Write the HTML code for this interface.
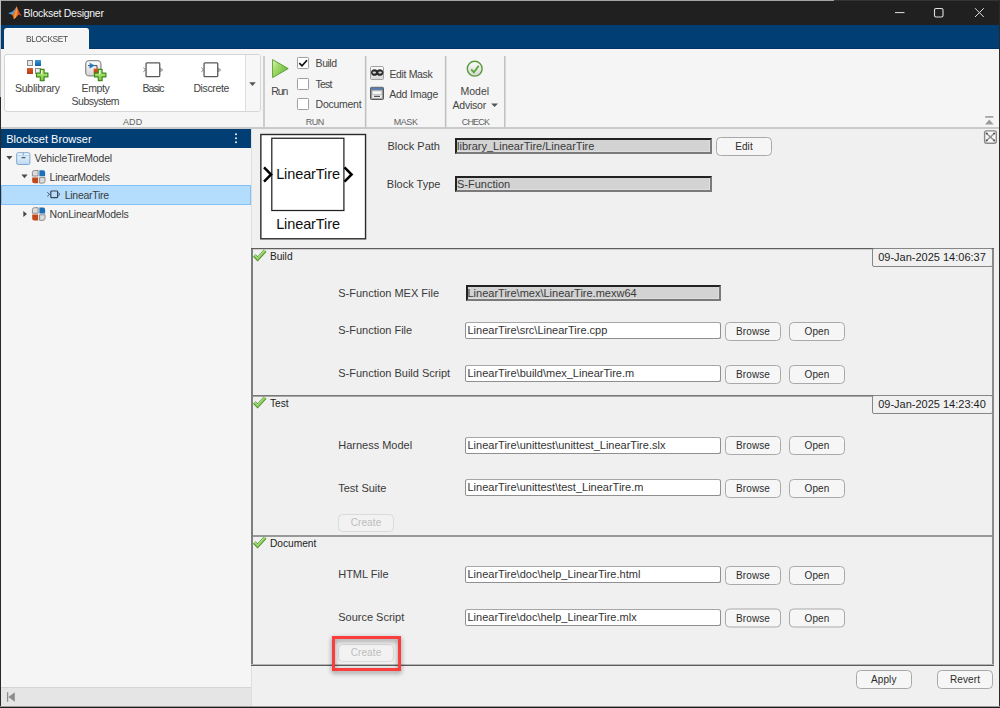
<!DOCTYPE html>
<html><head><meta charset="utf-8"><title>Blockset Designer</title>
<style>
*{box-sizing:border-box;margin:0;padding:0}
html,body{width:1000px;height:708px;overflow:hidden;background:#f0f0f0}
body{position:relative;font-family:"Liberation Sans",sans-serif;font-size:11px;color:#333}
.a{position:absolute}
.x{position:absolute;white-space:nowrap}
#titlebar{left:0;top:0;width:1000px;height:25px;background:#202020}
#band{left:0;top:25px;width:1000px;height:24px;background:#003e73;border-bottom:1px solid #00326a}
#tab{left:4px;top:28px;width:85px;height:22px;background:#f5f5f5;border-radius:3px 3px 0 0;border-top:1px solid #fff}
#strip{left:0;top:49px;width:1000px;height:79px;background:#f5f5f5}
#stripline{left:0;top:127px;width:1000px;height:2px;background:#cacaca}
.vsep{position:absolute;top:56px;width:3px;height:71px}
#gallery{left:4px;top:54px;width:257px;height:58px;background:#fff;border:1px solid #d6d6d6;border-radius:3px}
#galdd{left:245px;top:55px;width:15px;height:56px;background:#f7f7f7;border-left:1px solid #dedede;border-radius:0 2px 2px 0}
.cb{position:absolute;width:12px;height:12px;background:#fff;border:1px solid #a0a0a0;border-radius:1.5px;box-shadow:0 0 1px rgba(0,0,0,.15)}
#lpanel{left:1px;top:129px;width:250px;height:578px;background:#f5f5f5}
#lhead{left:1px;top:129px;width:250px;height:19px;background:#003e73}
#lfoot{left:1px;top:687px;width:250px;height:20px;background:#e5e5e5;border-top:1px solid #d4d4d4}
#sel{left:1px;top:185px;width:250px;height:20px;background:#b4ddfd;border:1px solid #82c0f5}
#rpanel{left:251px;top:129px;width:749px;height:578px;background:#f0f0f0}
.fld{position:absolute;left:465px;width:256px;height:17px;background:#fff;border:1px solid #8f8f8f;border-top-color:#a6a6a6;border-radius:2.5px;font-size:11px;line-height:15px;padding-left:1.5px;color:#333;white-space:nowrap;overflow:hidden}
.ro{position:absolute;height:16px;background:#d3d3d3;border:2px solid #7a7a7a;border-top:2px solid #222;border-left:2px solid #222;box-shadow:inset -1px -1px 0 #dedede;font-size:11px;line-height:12px;padding-left:0px;color:#3a3a3a;white-space:nowrap;overflow:hidden}
.btn{position:absolute;height:19px;background:#f6f6f6;border:1px solid #a9a9a9;border-radius:4.5px;font-size:10px;letter-spacing:0.1px;line-height:17px;text-align:center;color:#2c2c2c}
.dis{color:#bdbdbd;border-color:#dadada;background:#f2f2f2}
.pan{position:absolute;left:251px;width:743px;border:1px solid #6e6e6e;border-left:2px solid #7c7c7c;border-top-color:#5a5a5a;background:#f0f0f0}
.ts{position:absolute;left:872px;width:121px;height:19px;background:#f0f0f0;border:1px solid #868686;border-radius:2px;font-size:11px;line-height:17px;text-align:center;color:#1e1e1e;padding-right:1px}
</style></head>
<body>
<div class="a" id="titlebar"></div>
<svg class="a" style="left:6.800px;top:5.200px" width="17" height="16" viewBox="0 0 17 16">
  <path d="M1.2 8.300 L5.600 6.500 L8.200 3.800 L9.600 1.300 L7 10.400 L5 9.800 Z" fill="#4b9fe0"/>
  <path d="M5 9.800 L7.600 6.500 L9.600 1.300 C10.800 3.700 11.800 7.500 14.600 10.700 L11.800 9.500 L9 12.200 L6.800 14.300 L6 11.300 Z" fill="#e56f28"/>
  <path d="M9.600 1.300 C10.800 3.700 11.800 7.500 14.600 10.700 L11.900 9.500 C10.900 6.600 10.200 3.600 9.600 1.300Z" fill="#c93a2c"/>
  <path d="M6.800 14.300 L9 12.200 L10.300 5.200 L9.600 1.300 L8 8 Z" fill="#f7993a"/>
</svg>
<div class="x" style="left:23.6px;top:6.36px;font-size:10.5px;line-height:14px;color:#f2f2f2;letter-spacing:-0.27px;">Blockset Designer</div>
<svg class="a" style="left:890px;top:4px" width="100" height="18" viewBox="0 0 100 18">
  <path d="M5 8.600 H14.500" stroke="#e0e0e0" stroke-width="1" fill="none"/>
  <rect x="44.500" y="4.500" width="8.500" height="8.500" rx="1.600" stroke="#e0e0e0" stroke-width="1.100" fill="none"/>
  <path d="M85 4.200 L93.800 13 M93.800 4.200 L85 13" stroke="#e0e0e0" stroke-width="1" fill="none"/>
</svg>
<div class="a" id="band"></div>
<div class="a" id="strip"></div>
<div class="a" id="tab"></div>
<div class="x" style="left:4px;top:31.71px;font-size:9.5px;line-height:14px;color:#4a4a4a;letter-spacing:-0.4px;width:85.0px;text-align:center;transform:scaleX(0.88);transform-origin:50% 50%;padding-left:1px;">BLOCKSET</div>
<div class="a" id="gallery"></div>
<div class="a" id="galdd"></div>
<div class="a" id="stripline"></div>
<div class="vsep" style="left:263px;background:linear-gradient(to right,#cdcdcd 0 1px,#cdcdcd 1px 2px,transparent 2px)"></div>
<div class="vsep" style="left:364px;background:linear-gradient(to right,#ececec 0 1px,#c0c0c0 1px 2px,#e0e0e0 2px)"></div>
<div class="vsep" style="left:444px;background:linear-gradient(to right,#ececec 0 1px,#c0c0c0 1px 2px,#e0e0e0 2px)"></div>
<div class="vsep" style="left:504px;background:linear-gradient(to right,#c2c2c2 0 1px,#d8d8d8 1px 2px,transparent 2px)"></div>
<div class="x" style="left:92.6px;top:115.08px;font-size:9px;line-height:14px;color:#626262;letter-spacing:0.1px;width:80px;text-align:center;padding-left:0.00px;">ADD</div>
<div class="x" style="left:274.6px;top:115.08px;font-size:9px;line-height:14px;color:#626262;letter-spacing:-0.45px;width:80px;text-align:center;padding-left:0.45px;">RUN</div>
<div class="x" style="left:365.4px;top:115.08px;font-size:9px;line-height:14px;color:#626262;letter-spacing:-0.4px;width:80px;text-align:center;padding-left:0.40px;">MASK</div>
<div class="x" style="left:435.0px;top:115.08px;font-size:9px;line-height:14px;color:#626262;letter-spacing:-0.83px;width:80px;text-align:center;padding-left:0.83px;">CHECK</div>
<div class="x" style="left:15.0px;top:80.96px;font-size:10.5px;line-height:14px;color:#444;letter-spacing:-0.24px;">Sublibrary</div>
<div class="x" style="left:81.6px;top:80.96px;font-size:10.5px;line-height:14px;color:#444;letter-spacing:-0.4px;">Empty</div>
<div class="x" style="left:71.6px;top:94.16px;font-size:10.5px;line-height:14px;color:#444;letter-spacing:-0.5px;">Subsystem</div>
<div class="x" style="left:142.4px;top:80.96px;font-size:10.5px;line-height:14px;color:#444;letter-spacing:-0.88px;">Basic</div>
<div class="x" style="left:193.4px;top:80.96px;font-size:10.5px;line-height:14px;color:#444;letter-spacing:-0.36px;">Discrete</div>
<div class="x" style="left:271.2px;top:84.16px;font-size:10.5px;line-height:14px;color:#444;letter-spacing:-1.05px;">Run</div>
<div class="x" style="left:315.6px;top:55.96px;font-size:10.5px;line-height:14px;color:#444;letter-spacing:-0.47px;">Build</div>
<div class="x" style="left:315.6px;top:76.96px;font-size:10.5px;line-height:14px;color:#444;letter-spacing:-0.83px;">Test</div>
<div class="x" style="left:315.6px;top:97.36px;font-size:10.5px;line-height:14px;color:#444;letter-spacing:-0.27px;">Document</div>
<div class="x" style="left:389.4px;top:66.96px;font-size:10.5px;line-height:14px;color:#444;letter-spacing:-0.34px;">Edit Mask</div>
<div class="x" style="left:389.2px;top:87.16px;font-size:10.5px;line-height:14px;color:#444;letter-spacing:-0.21px;">Add Image</div>
<div class="x" style="left:460.4px;top:84.16px;font-size:10.5px;line-height:14px;color:#444;letter-spacing:0.05px;">Model</div>
<div class="x" style="left:452.6px;top:97.96px;font-size:10.5px;line-height:14px;color:#444;letter-spacing:-0.23px;">Advisor</div>
<svg class="a" style="left:0;top:49px" width="1000" height="79" viewBox="0 49 1000 79">
  <defs>
    <linearGradient id="gr" x1="0" y1="0" x2="1" y2="0.6"><stop offset="0" stop-color="#e4f6cc"/><stop offset="0.35" stop-color="#a6dc6e"/><stop offset="1" stop-color="#6eb83a"/></linearGradient>
    <linearGradient id="gb" x1="0" y1="0" x2="0" y2="1"><stop offset="0" stop-color="#3a9ada"/><stop offset="1" stop-color="#0d5ea6"/></linearGradient>
    <linearGradient id="go" x1="0" y1="0" x2="0" y2="1"><stop offset="0" stop-color="#d85a28"/><stop offset="1" stop-color="#b83a12"/></linearGradient>
    <linearGradient id="gg" x1="0" y1="0" x2="0" y2="1"><stop offset="0" stop-color="#fdfdfd"/><stop offset="1" stop-color="#d6d6d6"/></linearGradient>
    <linearGradient id="gp" x1="0" y1="0" x2="0" y2="1"><stop offset="0" stop-color="#c4f08c"/><stop offset="1" stop-color="#7cc83c"/></linearGradient>
  </defs>
  <!-- sublibrary -->
  <rect x="27.500" y="60.500" width="5" height="5" fill="#e6e6e6" stroke="#8c8c8c"/>
  <rect x="35" y="60" width="6" height="6" rx="0.500" fill="url(#gb)"/>
  <rect x="27" y="68" width="6" height="6" rx="0.500" fill="url(#go)"/>
  <rect x="35.500" y="68.500" width="5" height="5" fill="#ececec" stroke="#8c8c8c"/>
  <g transform="translate(35.900,68.700)"><path d="M4.400 0.600h3.800v3.800h3.800v3.800h-3.800v3.800h-3.800v-3.800h-3.800v-3.800h3.800z" fill="url(#gp)" stroke="#3f8a1e" stroke-width="1.200" stroke-linejoin="round"/><path d="M5.700 2v3.500" stroke="#f2fde4" stroke-width="1.200"/></g>
  <!-- empty subsystem -->
  <rect x="85.700" y="60.700" width="15.200" height="15.200" rx="3.500" fill="url(#gg)" stroke="#8e8e8e" stroke-width="1.300"/>
  <path d="M88 65.600h3M94 65.600h3v3.500" stroke="#4a4a4a" fill="none" stroke-width="1"/>
  <path d="M89.600 62.600 l5.200 3 l-5.200 3z" fill="url(#gb)"/>
  <rect x="93.700" y="68.600" width="4.600" height="5" fill="url(#go)"/>
  <g transform="translate(93.900,68.700)"><path d="M4.400 0.600h3.800v3.800h3.800v3.800h-3.800v3.800h-3.800v-3.800h-3.800v-3.800h3.800z" fill="url(#gp)" stroke="#3f8a1e" stroke-width="1.200" stroke-linejoin="round"/><path d="M5.700 2v3.500" stroke="#f2fde4" stroke-width="1.200"/></g>
  <!-- basic / discrete -->
  <g transform="translate(145.400,62.300)"><rect x="0.650" y="0.650" width="13.700" height="13.700" rx="0.800" fill="#fff" stroke="#5a5a5a" stroke-width="1.300"/><path d="M-2 5.500l2.200 2l-2.200 2" stroke="#6a6a6a" fill="none" stroke-width="0.900"/><path d="M15 5.800l2.300 1.800l-2.300 1.800z" fill="#f4f4f4" stroke="#6a6a6a" stroke-width="0.800"/></g>
  <g transform="translate(203.400,62.300)"><rect x="0.650" y="0.650" width="13.700" height="13.700" rx="0.800" fill="#fff" stroke="#5a5a5a" stroke-width="1.300"/><path d="M-2 5.500l2.200 2l-2.200 2" stroke="#6a6a6a" fill="none" stroke-width="0.900"/><path d="M15 5.800l2.300 1.800l-2.300 1.800z" fill="#f4f4f4" stroke="#6a6a6a" stroke-width="0.800"/></g>
  <!-- gallery dropdown -->
  <path d="M249.200 82.300h6.600l-3.300 3.600z" fill="#555"/>
  <!-- run -->
  <path d="M272.600 59.600 L288.200 68.600 L272.600 77.600z" fill="url(#gr)" stroke="#5f9f38" stroke-width="1" stroke-linejoin="round"/>
  <!-- edit mask icon -->
  <rect x="370.500" y="66.500" width="13" height="13" rx="1" fill="url(#gg)" stroke="#a0a0a0"/>
  <path d="M371 72.200c0.400-3.200 4.200-3.900 6.200-2c2-1.900 5.800-1.200 6.200 2c0.300 3.200-4 5-6.200 2.500c-2.200 2.500-6.500 0.700-6.200-2.500z" fill="#2a2a2a"/>
  <ellipse cx="374.300" cy="72.600" rx="1.800" ry="1.100" fill="#d4d4d4"/><ellipse cx="380.100" cy="72.600" rx="1.800" ry="1.100" fill="#d4d4d4"/>
  <!-- add image icon -->
  <rect x="370.500" y="87.300" width="13" height="12.200" rx="1" fill="#9a9a9a" stroke="#585858"/>
  <rect x="371" y="87.600" width="12" height="2.400" fill="#5a7fae"/>
  <rect x="372" y="90.400" width="10" height="8" fill="#c8c8c8"/>
  <rect x="372.800" y="91.400" width="8.400" height="2.300" rx="0.500" fill="#fdfdfd"/>
  <rect x="372.300" y="94.900" width="9.400" height="2.800" rx="0.800" fill="#f2f2f2"/>
  <path d="M374 96.300h6" stroke="#3a3a3a" stroke-width="1.100"/>
  <!-- model advisor -->
  <circle cx="474.700" cy="68.700" r="7.400" fill="url(#gg)" stroke="#5c9a3c" stroke-width="1.400"/>
  <path d="M471.200 69.300l2.700 3l4.800-6.600" stroke="#58a832" stroke-width="1.800" fill="none"/>
  <path d="M491.200 103.400h6.800l-3.400 3.700z" fill="#555"/>
  <!-- collapse icon -->
  <path d="M985.200 116.900h8.200" stroke="#9c9c9c" stroke-width="1.600"/>
  <path d="M985 124.600h8.600l-4.300-5.200z" fill="#9c9c9c"/>
</svg>
<div class="cb" style="left:297px;top:57px"></div>
<div class="cb" style="left:297px;top:77.500px"></div>
<div class="cb" style="left:297px;top:98px"></div>
<svg class="a" style="left:296px;top:56px" width="14" height="14"><path d="M3.300 7.100l2.700 2.700l5-5.600" stroke="#111" stroke-width="1.700" fill="none"/></svg>
<div class="a" id="lpanel"></div>
<div class="a" id="rpanel"></div>
<div class="a" style="left:251px;top:129px;width:1px;height:577px;background:#dedede"></div>
<div class="a" id="lhead"></div>
<div class="x" style="left:6.2px;top:132.19px;font-size:11px;line-height:14px;color:#fff;letter-spacing:0.03px;">Blockset Browser</div>
<svg class="a" style="left:233px;top:131px" width="6" height="14"><circle cx="3" cy="3.200" r="0.950" fill="#fff"/><circle cx="3" cy="7.200" r="0.950" fill="#fff"/><circle cx="3" cy="11.200" r="0.950" fill="#fff"/></svg>
<div class="a" id="sel"></div>
<div class="x" style="left:34.4px;top:151.36px;font-size:10.5px;line-height:14px;color:#3c3c3c;letter-spacing:-0.16px;">VehicleTireModel</div>
<div class="x" style="left:49.6px;top:169.96px;font-size:10.5px;line-height:14px;color:#3c3c3c;letter-spacing:-0.25px;">LinearModels</div>
<div class="x" style="left:64.8px;top:188.16px;font-size:10.5px;line-height:14px;color:#3c3c3c;letter-spacing:-0.3px;">LinearTire</div>
<div class="x" style="left:49.6px;top:207.16px;font-size:10.5px;line-height:14px;color:#3c3c3c;letter-spacing:-0.22px;">NonLinearModels</div>
<svg class="a" style="left:0;top:148px" width="252" height="80" viewBox="0 148 252 80">
  <defs>
    <linearGradient id="tm" x1="0" y1="0" x2="0" y2="1"><stop offset="0" stop-color="#f2f8fe"/><stop offset="1" stop-color="#bcd8f2"/></linearGradient>
  </defs>
  <path d="M6.300 155.900h6.200l-3.100 3.900z" fill="#4a4a4a"/>
  <path d="M21.400 174.400h6.200l-3.100 3.900z" fill="#4a4a4a"/>
  <path d="M23.300 211v6l3.700-3z" fill="#4a4a4a"/>
  <!-- model icon -->
  <rect x="16.700" y="152.700" width="13.200" height="11.800" rx="1.500" fill="url(#tm)" stroke="#7fa8d2" stroke-width="1"/>
  <path d="M17.200 155.600h12.200" stroke="#a8c8e8" stroke-width="0.800"/>
  <path d="M23.300 152.700v2.600" stroke="#7fa8d2" stroke-width="1"/>
  <path d="M21.600 157.600h3.800" stroke="#4a5a70" stroke-width="1.300"/>
  <g transform="translate(31.900,170)"><rect x="0.200" y="0.200" width="13.400" height="13" rx="2" fill="#f0f0f0"/>
      <path d="M0.500 6v-3.500a2 2 0 0 1 2-2h3.700v5.500z" fill="#dcdcdc" stroke="#858585" stroke-width="0.900"/>
      <path d="M7.500 0.300h3.700a2 2 0 0 1 2 2v3.900h-5.700z" fill="#1a6fb8"/>
      <path d="M0.300 7.400h5.900v5.800h-3.900a2 2 0 0 1 -2-2z" fill="#c2481c"/>
      <path d="M7.700 7.600h5.400v3.500a2 2 0 0 1 -2 2h-3.400z" fill="#dcdcdc" stroke="#858585" stroke-width="0.900"/></g>
  <g transform="translate(31.900,207.200)"><rect x="0.200" y="0.200" width="13.400" height="13" rx="2" fill="#f0f0f0"/>
      <path d="M0.500 6v-3.500a2 2 0 0 1 2-2h3.700v5.500z" fill="#dcdcdc" stroke="#858585" stroke-width="0.900"/>
      <path d="M7.500 0.300h3.700a2 2 0 0 1 2 2v3.900h-5.700z" fill="#1a6fb8"/>
      <path d="M0.300 7.400h5.900v5.800h-3.900a2 2 0 0 1 -2-2z" fill="#c2481c"/>
      <path d="M7.700 7.600h5.400v3.500a2 2 0 0 1 -2 2h-3.400z" fill="#dcdcdc" stroke="#858585" stroke-width="0.900"/></g>
  <!-- block icon -->
  <rect x="50.800" y="191" width="6.800" height="6.700" rx="0.800" fill="none" stroke="#3a4350" stroke-width="1.200"/>
  <path d="M47.300 192.300l2.300 2l-2.300 2" stroke="#3a4350" fill="none" stroke-width="0.900"/>
  <path d="M58.200 192.700l1.800 1.600l-1.800 1.600" stroke="#3a4350" fill="none" stroke-width="0.900"/>
</svg>
<div class="a" id="lfoot"></div>
<svg class="a" style="left:5px;top:690px" width="12" height="14"><path d="M2.600 2.200v9.600" stroke="#8c8c8c" stroke-width="1.300"/><path d="M9.800 2.200v9.600l-6.400-4.800z" fill="#8c8c8c"/></svg>
<svg class="a" style="left:980px;top:128px" width="19" height="18" viewBox="980 128 19 18"><rect x="984.600" y="130.900" width="11.700" height="12.300" rx="1.900" fill="#f7f7f7" stroke="#8a8a8a" stroke-width="1.400"/><path d="M986.600 133.400l7.600 7M994.200 133.400l-7.600 7" stroke="#8e8e8e" stroke-width="1.300"/><rect x="989.300" y="135.900" width="2.200" height="2.200" fill="#909090"/><circle cx="986.700" cy="133.500" r="1" fill="#4c4c4c"/><circle cx="994.100" cy="133.500" r="1" fill="#4c4c4c"/><circle cx="986.700" cy="140.400" r="1" fill="#4c4c4c"/><circle cx="994.100" cy="140.400" r="1" fill="#4c4c4c"/></svg>
<svg class="a" style="left:255px;top:130px" width="120" height="115" viewBox="255 130 120 115">
<rect x="260.850" y="134.500" width="104.700" height="104.300" fill="#fff" stroke="#2a2a2a" stroke-width="1.400"/>
<rect x="271.800" y="138.250" width="72.100" height="72.250" fill="#fff" stroke="#222" stroke-width="1.250"/>
<path d="M264 167.400l7.100 7.100l-7.100 7.100" stroke="#000" stroke-width="2.500" fill="none"/>
<path d="M344.500 167.400l7.100 7.100l-7.100 7.100" stroke="#000" stroke-width="2.500" fill="none"/>
</svg>
<div class="x" style="left:271px;top:167.38px;font-size:14.5px;line-height:14px;color:#111;letter-spacing:-0.1px;width:74px;text-align:center;">LinearTire</div>
<div class="x" style="left:271px;top:217.38px;font-size:14.5px;line-height:14px;color:#111;letter-spacing:-0.1px;width:74px;text-align:center;">LinearTire</div>
<div class="x" style="left:387.4px;top:139.39px;font-size:11px;line-height:14px;color:#3a3a3a;">Block Path</div>
<div class="x" style="left:386.8px;top:176.59px;font-size:11px;line-height:14px;color:#3a3a3a;">Block Type</div>
<div class="ro" style="left:455px;top:138px;width:256.500px">library_LinearTire/LinearTire</div>
<div class="ro" style="left:455px;top:176px;width:256.500px">S-Function</div>
<div class="btn" style="left:716px;top:137px;width:56px">Edit</div>
<div class="a" style="left:251px;top:248px;width:2px;height:418px;background:#7e7e7e"></div>
<div class="a" style="left:992px;top:248px;width:2px;height:418px;background:#8c8c8c"></div>
<div class="a" style="left:251px;top:248px;width:743px;height:1px;background:#5e5e5e"></div>
<div class="a" style="left:253px;top:249px;width:739px;height:1px;background:#cdcdcd"></div>
<div class="a" style="left:253px;top:395px;width:739px;height:1px;background:#787878"></div>
<div class="a" style="left:253px;top:396px;width:739px;height:1px;background:#a6a6a6"></div>
<div class="a" style="left:253px;top:535px;width:739px;height:2px;background:#989898"></div>
<div class="a" style="left:251px;top:664px;width:743px;height:1px;background:#b4b4b4"></div>
<div class="a" style="left:251px;top:665px;width:743px;height:1px;background:#5c5c5c"></div>
<svg class="a" style="left:252px;top:249px" width="16" height="14" viewBox="0 0 16 14"><path d="M2.300 6.500l3.300 3.500l7.600-8.400" stroke="#4c8a2c" stroke-width="3.500" fill="none" stroke-linejoin="miter"/><path d="M2.400 6.400l3.200 3.400l7.500-8.300" stroke="#8fd35c" stroke-width="1.900" fill="none"/><path d="M3 6l2.600 2.700l7-7.700" stroke="#c6efa0" stroke-width="0.700" fill="none"/></svg>
<svg class="a" style="left:252px;top:396px" width="16" height="14" viewBox="0 0 16 14"><path d="M2.300 6.500l3.300 3.500l7.600-8.400" stroke="#4c8a2c" stroke-width="3.500" fill="none" stroke-linejoin="miter"/><path d="M2.400 6.400l3.200 3.400l7.500-8.300" stroke="#8fd35c" stroke-width="1.900" fill="none"/><path d="M3 6l2.600 2.700l7-7.700" stroke="#c6efa0" stroke-width="0.700" fill="none"/></svg>
<svg class="a" style="left:252px;top:536px" width="16" height="14" viewBox="0 0 16 14"><path d="M2.300 6.500l3.300 3.500l7.600-8.400" stroke="#4c8a2c" stroke-width="3.500" fill="none" stroke-linejoin="miter"/><path d="M2.400 6.400l3.200 3.400l7.500-8.300" stroke="#8fd35c" stroke-width="1.900" fill="none"/><path d="M3 6l2.600 2.700l7-7.700" stroke="#c6efa0" stroke-width="0.700" fill="none"/></svg>
<div class="x" style="left:269.9px;top:249.67px;font-size:10.2px;line-height:14px;color:#222;">Build</div>
<div class="x" style="left:269.9px;top:396.67px;font-size:10.2px;line-height:14px;color:#222;">Test</div>
<div class="x" style="left:269.9px;top:536.67px;font-size:10.2px;line-height:14px;color:#222;">Document</div>
<div class="ts" style="top:248px">09-Jan-2025 14:06:37</div>
<div class="ts" style="top:395px">09-Jan-2025 14:23:40</div>
<div class="x" style="left:338.2px;top:286.19px;font-size:11px;line-height:14px;color:#3a3a3a;">S-Function MEX File</div>
<div class="ro" style="left:465.500px;top:285px;width:255.500px">LinearTire\mex\LinearTire.mexw64</div>
<div class="x" style="left:338.2px;top:323.19px;font-size:11px;line-height:14px;color:#3a3a3a;">S-Function File</div>
<div class="fld" style="top:322px">LinearTire\src\LinearTire.cpp</div>
<div class="btn" style="left:725px;top:322px;width:56px;">Browse</div>
<div class="btn" style="left:789px;top:322px;width:56px;">Open</div>
<div class="x" style="left:338.2px;top:366.19px;font-size:11px;line-height:14px;color:#3a3a3a;">S-Function Build Script</div>
<div class="fld" style="top:365px">LinearTire\build\mex_LinearTire.m</div>
<div class="btn" style="left:725px;top:365px;width:56px;">Browse</div>
<div class="btn" style="left:789px;top:365px;width:56px;">Open</div>
<div class="x" style="left:338.2px;top:437.99px;font-size:11px;line-height:14px;color:#3a3a3a;">Harness Model</div>
<div class="fld" style="top:437px">LinearTire\unittest\unittest_LinearTire.slx</div>
<div class="btn" style="left:725px;top:436px;width:56px;">Browse</div>
<div class="btn" style="left:789px;top:436px;width:56px;">Open</div>
<div class="x" style="left:338.2px;top:480.59px;font-size:11px;line-height:14px;color:#3a3a3a;">Test Suite</div>
<div class="fld" style="top:479px">LinearTire\unittest\test_LinearTire.m</div>
<div class="btn" style="left:725px;top:479px;width:56px;">Browse</div>
<div class="btn" style="left:789px;top:479px;width:56px;">Open</div>
<div class="btn dis" style="left:338px;top:514px;width:56px;height:18px;line-height:16px">Create</div>
<div class="x" style="left:338.2px;top:567.19px;font-size:11px;line-height:14px;color:#3a3a3a;">HTML File</div>
<div class="fld" style="top:566px">LinearTire\doc\help_LinearTire.html</div>
<div class="btn" style="left:725px;top:566px;width:56px;">Browse</div>
<div class="btn" style="left:789px;top:566px;width:56px;">Open</div>
<div class="x" style="left:338.2px;top:610.19px;font-size:11px;line-height:14px;color:#3a3a3a;">Source Script</div>
<div class="fld" style="top:609px">LinearTire\doc\help_LinearTire.mlx</div>
<div class="btn" style="left:725px;top:609px;width:56px;transform:translateY(-0.5px)">Browse</div>
<div class="btn" style="left:789px;top:609px;width:56px;transform:translateY(-0.5px)">Open</div>
<div class="btn dis" style="left:338px;top:644px;width:56px;height:18px;line-height:16px">Create</div>
<div class="a" style="left:332px;top:636px;width:69px;height:35px;border:3px solid #fb3d3d;filter:drop-shadow(0 2.500px 2.500px rgba(0,0,0,0.450))"></div>
<div class="btn" style="left:856px;top:670px;width:55.500px">Apply</div>
<div class="btn" style="left:937px;top:670px;width:56px">Revert</div>
<div class="a" style="left:0;top:0;width:834px;height:1px;background:#a4a4a4"></div>
<div class="a" style="left:834px;top:0;width:166px;height:1px;background:#343434"></div>
<div class="a" style="left:0;top:0;width:1px;height:97px;background:#bcbcbc"></div>
<div class="a" style="left:0;top:97px;width:1px;height:611px;background:#2c2826"></div>
<div class="a" style="left:999px;top:0;width:1px;height:708px;background:#2a2a2a"></div>
<div class="a" style="left:0;top:706px;width:1000px;height:1px;background:#9c9c9c"></div>
<div class="a" style="left:0;top:707px;width:1000px;height:1px;background:#1c1c1c"></div>
</body></html>
